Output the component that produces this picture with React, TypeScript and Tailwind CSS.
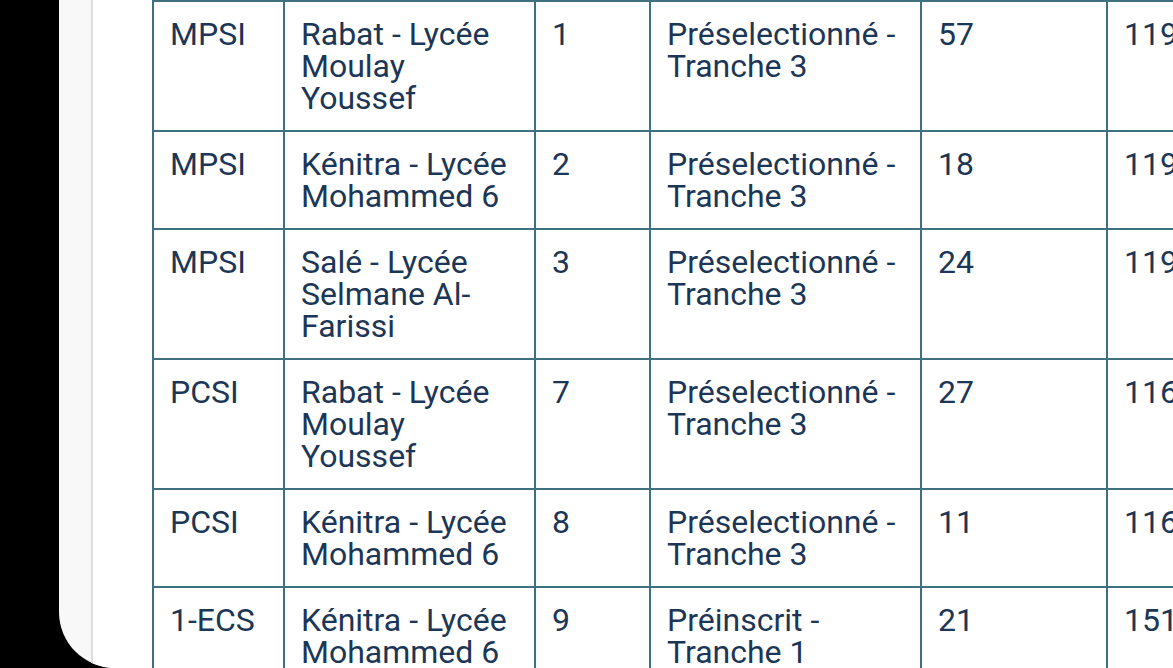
const rows: { filiere: string; centre: string[]; choix: string; statut: string[]; rang: string; note: string; tall: boolean }[] = [
  { filiere: 'MPSI', centre: ['Rabat - Lycée', 'Moulay', 'Youssef'], choix: '1', statut: ['Préselectionné -', 'Tranche 3'], rang: '57', note: '119.42', tall: true },
  { filiere: 'MPSI', centre: ['Kénitra - Lycée', 'Mohammed 6'], choix: '2', statut: ['Préselectionné -', 'Tranche 3'], rang: '18', note: '119.42', tall: false },
  { filiere: 'MPSI', centre: ['Salé - Lycée', 'Selmane Al-', 'Farissi'], choix: '3', statut: ['Préselectionné -', 'Tranche 3'], rang: '24', note: '119.42', tall: true },
  { filiere: 'PCSI', centre: ['Rabat - Lycée', 'Moulay', 'Youssef'], choix: '7', statut: ['Préselectionné -', 'Tranche 3'], rang: '27', note: '116.87', tall: true },
  { filiere: 'PCSI', centre: ['Kénitra - Lycée', 'Mohammed 6'], choix: '8', statut: ['Préselectionné -', 'Tranche 3'], rang: '11', note: '116.87', tall: false },
  { filiere: '1-ECS', centre: ['Kénitra - Lycée', 'Mohammed 6'], choix: '9', statut: ['Préinscrit -', 'Tranche 1'], rang: '21', note: '151.30', tall: false },
];

function Cell({ width, lines, tall }: { width: string; lines: string[]; tall: boolean }) {
  return (
    <div className={`${width} shrink-0 border-l-2 border-[#3d7180] pl-4 pr-4 pt-4 pb-4 ${tall ? 'h-[128px]' : 'h-[96px]'}`}>
      {lines.map((l, i) => (
        <div key={i} className="whitespace-nowrap">{l}</div>
      ))}
    </div>
  );
}

export default function App() {
  return (
    <div className="h-[668px] w-full bg-black overflow-hidden flex">
      <div className="ml-[59px] flex-1 bg-[#f8f8f8] rounded-bl-[56px] overflow-hidden flex">
        <div className="ml-[32px] flex-1 border-l-2 border-[#dedede] bg-white pl-[59px] overflow-hidden">
          <div
            className="text-[32px] leading-[32px] text-[#1b3656]"
            style={{ fontFamily: 'Roboto, "Noto Sans", sans-serif' }}
          >
            {rows.map((r, i) => (
              <div key={i} className="flex border-t-2 border-[#3d7180]">
                <Cell width="w-[131px]" lines={[r.filiere]} tall={r.tall} />
                <Cell width="w-[251px]" lines={r.centre} tall={r.tall} />
                <Cell width="w-[115px]" lines={[r.choix]} tall={r.tall} />
                <Cell width="w-[271px]" lines={r.statut} tall={r.tall} />
                <Cell width="w-[186px]" lines={[r.rang]} tall={r.tall} />
                <Cell width="w-[200px]" lines={[r.note]} tall={r.tall} />
              </div>
            ))}
          </div>
        </div>
      </div>
    </div>
  );
}
